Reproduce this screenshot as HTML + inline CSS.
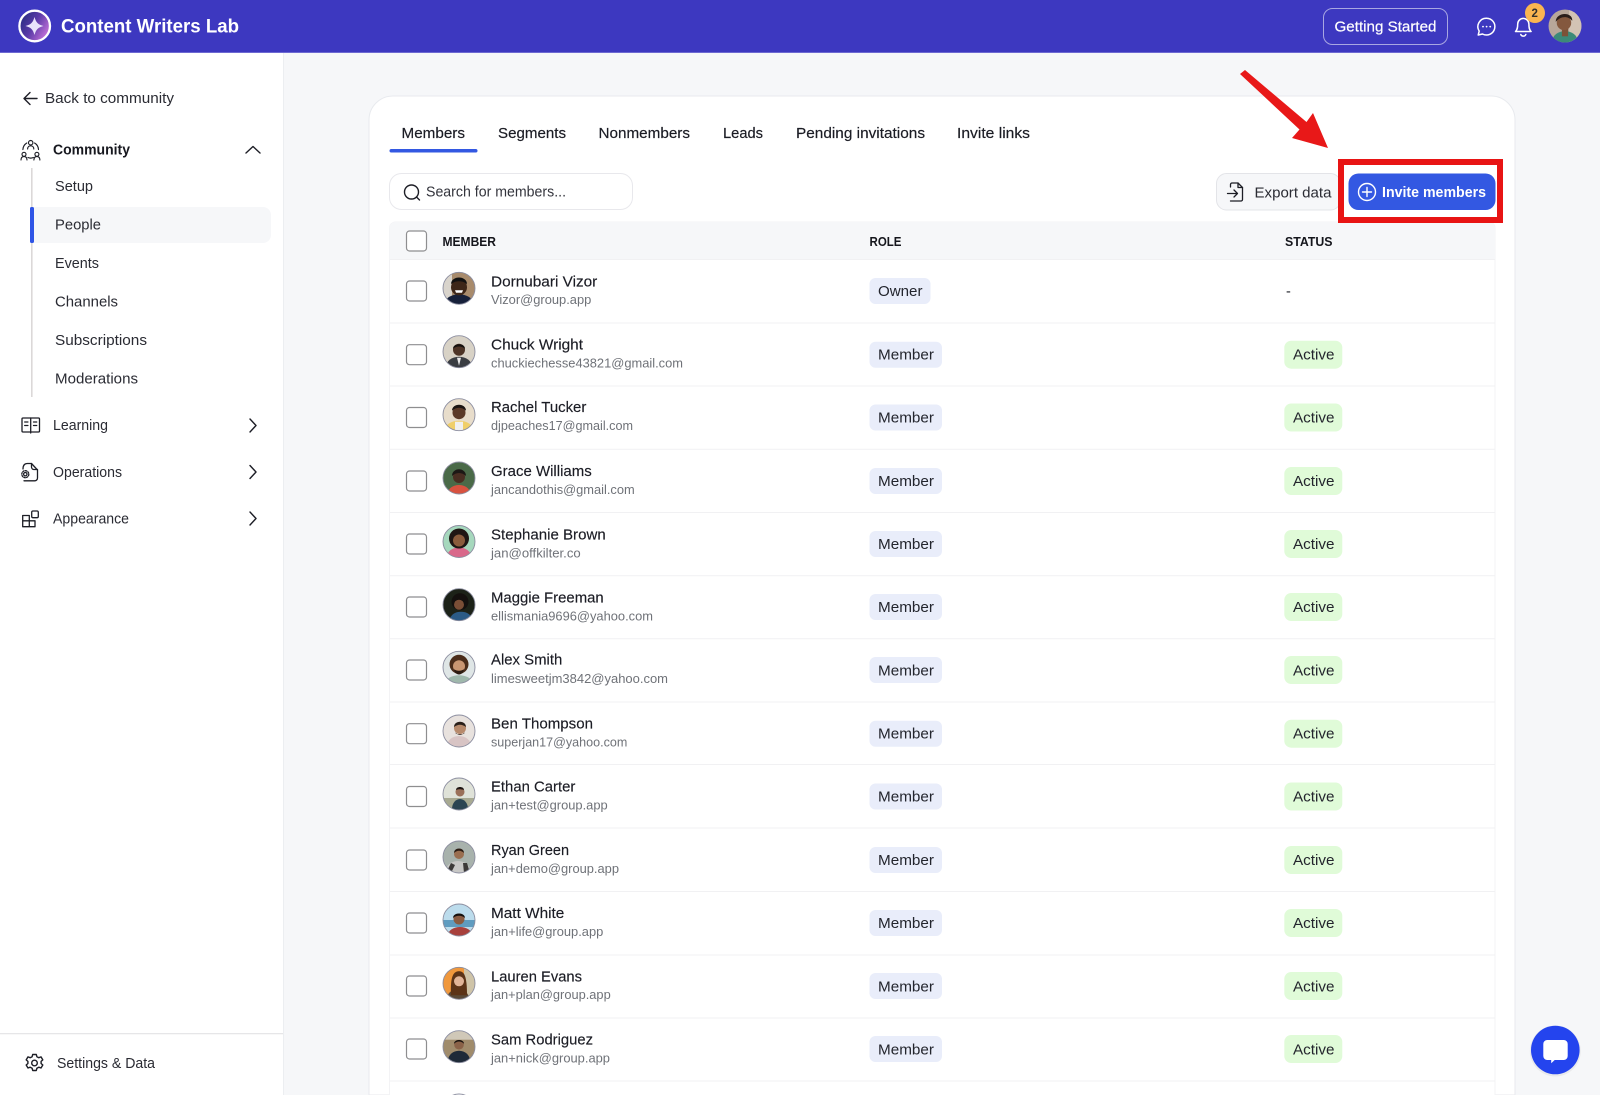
<!DOCTYPE html>
<html lang="en"><head><meta charset="utf-8"><title>Content Writers Lab</title>
<style>
html,body{margin:0;padding:0;background:#f6f7f9;width:1600px;height:1095px;overflow:hidden}
svg{display:block}
text{font-family:"Liberation Sans",sans-serif;fill:#1b1c24;white-space:pre}
.nm{font-size:15px;stroke:#1b1c24;stroke-width:.15}
.em{font-size:13px;fill:#6f7278}
.b{font-size:14.5px;fill:#23252d}
.s{font-size:14.5px;fill:#2a2b33}
.t{font-size:15px;stroke:#1b1c24;stroke-width:.18}
.h{font-size:12.5px;font-weight:bold;fill:#15161c}
.ic{fill:none;stroke:#1d1e26;stroke-width:1.4;stroke-linecap:round;stroke-linejoin:round}
.cb{fill:#fff;stroke:#8e8e90;stroke-width:1.2}
.dv{stroke:#f1f1f3;stroke-width:1}
.r{fill:#e9edfa}.a{fill:#e0fbd8}
.ring{fill:none;stroke:#8c8ea0;stroke-width:.9}
</style></head><body>
<svg width="1600" height="1095" viewBox="0 0 1600 1095" xmlns="http://www.w3.org/2000/svg">
<defs>
<clipPath id="av"><circle cx="0" cy="0" r="16"/></clipPath>
<linearGradient id="lg" x1="0" y1="0" x2="1" y2=".6"><stop offset="0" stop-color="#1b2a78"/><stop offset=".55" stop-color="#5a3aa8"/><stop offset="1" stop-color="#c070d8"/></linearGradient>
</defs>
<rect width="1600" height="1095" fill="#f6f7f9"/>
<!-- sidebar -->
<rect x="0" y="52" width="283.5" height="1043" fill="#fff"/>
<rect x="283" y="52" width="1" height="1043" fill="#eceef1"/>
<!-- header -->
<rect width="1600" height="52.5" fill="#3d38c0"/>
<rect y="52" width="1600" height="1" fill="#6d69d2"/>
<circle cx="34.7" cy="26" r="15.3" fill="url(#lg)" stroke="#fff" stroke-width="2.3"/>
<path d="M34.5 17C36 22.500 38 24.500 43.500 26C38 27.500 36 29.500 34.500 35C33 29.500 31 27.500 25.500 26C31 24.500 33 22.500 34.500 17Z" fill="#e9e4fb"/>
<text x="61" y="32.500" font-size="19" font-weight="bold" style="fill:#fff" textLength="178" lengthAdjust="spacingAndGlyphs">Content Writers Lab</text>
<rect x="1323.500" y="8.500" width="124" height="36" rx="9" fill="none" stroke="#a9a7e2" stroke-width="1"/>
<text x="1334.500" y="31.500" font-size="15" style="fill:#fff;stroke:#fff;stroke-width:.2" textLength="102" lengthAdjust="spacingAndGlyphs">Getting Started</text>
<path d="M1486.500 18.200a8.400 8.400 0 1 1-4 15.800l-4.300 1 1-3.900a8.400 8.400 0 0 1 7.300-12.900Z" fill="none" stroke="#fff" stroke-width="1.500" stroke-linejoin="round"/>
<circle cx="1483" cy="26.600" r=".9" fill="#fff"/><circle cx="1486.600" cy="26.600" r=".9" fill="#fff"/><circle cx="1490.200" cy="26.600" r=".9" fill="#fff"/>
<path d="M1515.500 31.500c1.800-1.800 2.200-3.600 2.200-7.500a5.600 5.600 0 0 1 11.200 0c0 3.900.4 5.700 2.200 7.500Z" fill="none" stroke="#fff" stroke-width="1.500" stroke-linejoin="round"/>
<path d="M1520.800 34.500a2.700 2.700 0 0 0 5 0" fill="none" stroke="#fff" stroke-width="1.500" stroke-linecap="round"/>
<circle cx="1535" cy="13" r="10" fill="#fab550"/>
<text x="1531.500" y="17" font-size="11.500" font-weight="bold" style="fill:#33302a">2</text>
<g transform="translate(1565,26) scale(1.03)" clip-path="url(#av)"><rect x="-16" y="-16" width="32" height="32" fill="#b8a79a"/><rect x="4" y="-16" width="12" height="32" fill="#d3c3b4"/><ellipse cx="0" cy="14" rx="12" ry="9" fill="#3c8a78"/><rect x="-3" y="2" width="6" height="8" fill="#7c5238"/><circle cx="-1" cy="-3" r="7" fill="#84583e"/><path d="M-9-4C-9-14 8-14 7-5C3-10-4-10-9-4Z" fill="#2a1e1a"/></g>
<!-- sidebar content -->
<path class="ic" d="M37 98.500H24.500M30 92.500L24 98.500L30 104.500"/>
<text x="45" y="103" class="s" textLength="129" lengthAdjust="spacingAndGlyphs">Back to community</text>
<g class="ic" style="stroke-width:1.150">
<circle cx="30.700" cy="142.700" r="2.200"/><circle cx="24" cy="154.300" r="2"/><circle cx="36.900" cy="154.300" r="2"/>
<path d="M21 160c0-2.400 1.200-3.400 3-3.400s3 1 3 3.400M33.900 160c0-2.400 1.200-3.400 3-3.400s3 1 3 3.400"/>
<path d="M27.600 149c0-2 1.300-3.200 3.100-3.200s3.100 1.200 3.100 3.200M26.800 143c-2.200 1.300-3.700 3.700-3.900 6.500M34.600 143c2.200 1.300 3.700 3.700 3.900 6.500M28 157.500c1.700.8 3.700.8 5.400 0"/></g>
<text x="53" y="154.300" font-size="14.500" font-weight="bold" style="fill:#17181f" textLength="77" lengthAdjust="spacingAndGlyphs">Community</text>
<path class="ic" d="M246 153L253 146.500L260 153"/>
<rect x="31" y="168" width="1.600" height="229" fill="#dbd8d8"/>
<path d="M34 207H263a8 8 0 0 1 8 8v20a8 8 0 0 1-8 8H34Z" fill="#f6f7f9"/>
<rect x="30" y="207" width="4" height="36" rx="1.500" fill="#2f55e6"/>
<text x="55" y="191" class="s" textLength="38" lengthAdjust="spacingAndGlyphs">Setup</text>
<text x="55" y="229.500" class="s" textLength="46" lengthAdjust="spacingAndGlyphs">People</text>
<text x="55" y="268" class="s" textLength="44" lengthAdjust="spacingAndGlyphs">Events</text>
<text x="55" y="306.700" class="s" textLength="63" lengthAdjust="spacingAndGlyphs">Channels</text>
<text x="55" y="345" class="s" textLength="92" lengthAdjust="spacingAndGlyphs">Subscriptions</text>
<text x="55" y="383.700" class="s" textLength="83" lengthAdjust="spacingAndGlyphs">Moderations</text>
<g class="ic" style="stroke-width:1.300"><rect x="22" y="418" width="17.500" height="14" rx="1"/><path d="M30.700 418v15"/><path d="M24.700 422h3.200M24.700 425.500h3.200M33.500 422h3.200M33.500 425.500h3.200"/></g>
<text x="53" y="430" class="s" textLength="55" lengthAdjust="spacingAndGlyphs">Learning</text>
<path class="ic" d="M250 419L256 425.500L250 432"/>
<g class="ic" style="stroke-width:1.300"><path d="M23 469c0-3.500 1.500-5.500 4.500-5.500h4l6 6.500v8a2.800 2.800 0 0 1-2.800 2.800H24"/><path d="M31.500 463.500v3.500a2.500 2.500 0 0 0 2.500 2.500h3.500"/><circle cx="25.300" cy="474.200" r="1.700"/><circle cx="25.300" cy="474.200" r="3.500" stroke-dasharray="1.400 1.350"/></g>
<text x="53" y="477" class="s" textLength="69" lengthAdjust="spacingAndGlyphs">Operations</text>
<path class="ic" d="M250 465.500L256 472L250 478.500"/>
<g class="ic" style="stroke-width:1.300"><path d="M22.700 526.700V515.500h6.600v11.200ZM22.700 520.800H35v5.900H22.700"/><rect x="31.700" y="511" width="6.600" height="6.700" rx="1.300"/></g>
<text x="53" y="523.700" class="s" textLength="76" lengthAdjust="spacingAndGlyphs">Appearance</text>
<path class="ic" d="M250 512L256 518.500L250 525"/>
<rect x="0" y="1033" width="283" height="1.300" fill="#e6e6e8"/>
<g class="ic"><circle cx="34.500" cy="1063" r="2.800"/><path d="M32.700 1054.500h3.600l.6 2.200 1.900 1 2.200-.8 1.800 3-1.700 1.500v2.100l1.700 1.500-1.800 3-2.200-.8-1.900 1-.6 2.300h-3.600l-.6-2.300-1.900-1-2.200.8-1.800-3 1.700-1.500v-2.100l-1.700-1.500 1.800-3 2.200.8 1.900-1z"/></g>
<text x="57" y="1068" class="s" textLength="98" lengthAdjust="spacingAndGlyphs">Settings &amp; Data</text>
<!-- card -->
<path d="M369 1095V120a24 24 0 0 1 24-24H1491a24 24 0 0 1 24 24V1095Z" fill="#fff" stroke="#e8eaee" stroke-width="1"/>
<text x="401.500" y="138" class="t" textLength="63.500" lengthAdjust="spacingAndGlyphs">Members</text>
<text x="498" y="138" class="t" textLength="68" lengthAdjust="spacingAndGlyphs">Segments</text>
<text x="598.500" y="138" class="t" textLength="91.500" lengthAdjust="spacingAndGlyphs">Nonmembers</text>
<text x="723" y="138" class="t" textLength="40" lengthAdjust="spacingAndGlyphs">Leads</text>
<text x="796" y="138" class="t" textLength="129" lengthAdjust="spacingAndGlyphs">Pending invitations</text>
<text x="957" y="138" class="t" textLength="73" lengthAdjust="spacingAndGlyphs">Invite links</text>
<rect x="389.500" y="149" width="88" height="3.500" rx="1.750" fill="#3358e2"/>
<rect x="389.500" y="173.500" width="243" height="36" rx="12" fill="#fff" stroke="#e8e8ec"/>
<circle cx="411.500" cy="192" r="7" fill="none" stroke="#1d1e26" stroke-width="1.400"/><path d="M416.500 197l3 3" stroke="#1d1e26" stroke-width="1.400" stroke-linecap="round"/>
<text x="426" y="196.500" font-size="14.500" style="fill:#33343c" textLength="140" lengthAdjust="spacingAndGlyphs">Search for members...</text>
<rect x="1216.500" y="173.500" width="124" height="36.500" rx="10" fill="#f6f7f9" stroke="#e3e4e8"/>
<g class="ic" style="stroke-width:1.300"><path d="M1230.500 187v-2.500a1.500 1.500 0 0 1 1.500-1.500h6l4.500 4.500v12a1.500 1.500 0 0 1-1.500 1.500h-10.500"/><path d="M1238 183v4.500h4.500M1227.500 193.500h10M1234 190l3.500 3.500-3.500 3.500"/></g>
<text x="1254.500" y="197.500" class="s" textLength="77" lengthAdjust="spacingAndGlyphs">Export data</text>
<path d="M1245 70L1306.500 122L1313 113L1328 148L1292 138L1299.500 129.500L1240 74Z" fill="#e81818"/>
<!-- table -->
<path d="M389.500 1095V228a6 6 0 0 1 6-6H1489a6 6 0 0 1 6 6V1095" fill="#fff" stroke="#f3f3f5"/>
<path d="M389.500 259.500V228a6 6 0 0 1 6-6H1489a6 6 0 0 1 6 6V259.500Z" fill="#f6f7f9"/>
<line class="dv" x1="390" x2="1495" y1="259.500" y2="259.500"/>
<line class="dv" x1="390" x2="1495" y1="323" y2="323"/>
<line class="dv" x1="390" x2="1495" y1="386" y2="386"/>
<line class="dv" x1="390" x2="1495" y1="449.300" y2="449.300"/>
<line class="dv" x1="390" x2="1495" y1="512.500" y2="512.500"/>
<line class="dv" x1="390" x2="1495" y1="575.700" y2="575.700"/>
<line class="dv" x1="390" x2="1495" y1="638.800" y2="638.800"/>
<line class="dv" x1="390" x2="1495" y1="702" y2="702"/>
<line class="dv" x1="390" x2="1495" y1="764.500" y2="764.500"/>
<line class="dv" x1="390" x2="1495" y1="828" y2="828"/>
<line class="dv" x1="390" x2="1495" y1="891.500" y2="891.500"/>
<line class="dv" x1="390" x2="1495" y1="955" y2="955"/>
<line class="dv" x1="390" x2="1495" y1="1018" y2="1018"/>
<line class="dv" x1="390" x2="1495" y1="1081" y2="1081"/>
<!-- red highlight and invite button, above table -->
<rect x="1341" y="162" width="159" height="58" fill="#fff" stroke="#e81414" stroke-width="6"/>
<rect x="1348.500" y="173.500" width="147" height="36.500" rx="10" fill="#3358e2"/>
<circle cx="1367" cy="192" r="8.500" fill="none" stroke="#fff" stroke-width="1.400"/><path d="M1367 187.500v9M1362.500 192h9" stroke="#fff" stroke-width="1.400" stroke-linecap="round"/>
<text x="1382" y="197" font-size="14.500" font-weight="bold" style="fill:#fff" textLength="104" lengthAdjust="spacingAndGlyphs">Invite members</text>
<rect class="cb" x="406.500" y="231" width="20" height="20" rx="3"/>
<text x="442.500" y="246" class="h" textLength="53.500" lengthAdjust="spacingAndGlyphs">MEMBER</text>
<text x="869.500" y="246" class="h" textLength="32" lengthAdjust="spacingAndGlyphs">ROLE</text>
<text x="1285" y="246" class="h" textLength="47.500" lengthAdjust="spacingAndGlyphs">STATUS</text>

<!-- row 1 -->
<rect class="cb" x="406.500" y="281" width="20" height="20" rx="3"/>
<g transform="translate(459,288.300)" clip-path="url(#av)"><rect x="-16" y="-16" width="32" height="32" fill="#a88b6c"/><rect x="-16" y="-16" width="9" height="32" fill="#d9d4cc"/><ellipse cx="0" cy="15" rx="14" ry="9" fill="#16203a"/><circle cx="0" cy="-1" r="8" fill="#3d2618"/><path d="M-8-4C-8-13 8-13 8-4C4-8-4-8-8-4Z" fill="#111"/><path d="M-4 2h8l-1 2.500h-6Z" fill="#fff"/></g><circle class="ring" cx="459" cy="288.300" r="16"/>
<text x="491" y="286.300" class="nm" textLength="106.300" lengthAdjust="spacingAndGlyphs">Dornubari Vizor</text>
<text x="491" y="304.100" class="em" textLength="100.300" lengthAdjust="spacingAndGlyphs">Vizor@group.app</text>
<rect class="r" x="869.500" y="278" width="61" height="26" rx="6"/>
<text x="878" y="296" class="b" textLength="44.500" lengthAdjust="spacingAndGlyphs">Owner</text>
<text x="1286" y="296" class="b">-</text>
<!-- row 2 -->
<rect class="cb" x="406.500" y="344.700" width="20" height="20" rx="3"/>
<g transform="translate(459,351.700)" clip-path="url(#av)"><rect x="-16" y="-16" width="32" height="32" fill="#d8d2c6"/><ellipse cx="0" cy="15" rx="13" ry="10" fill="#3a3d42"/><path d="M-2 6h4l-2 8Z" fill="#e8e8e8"/><circle cx="0" cy="-2" r="6" fill="#4d3426"/><path d="M-6-3C-6-9 6-9 6-3C3-6-3-6-6-3Z" fill="#15110e"/></g><circle class="ring" cx="459" cy="351.700" r="16"/>
<text x="491" y="349.700" class="nm" textLength="92" lengthAdjust="spacingAndGlyphs">Chuck Wright</text>
<text x="491" y="367.500" class="em" textLength="192" lengthAdjust="spacingAndGlyphs">chuckiechesse43821@gmail.com</text>
<rect class="r" x="869.500" y="341.700" width="72.500" height="26" rx="6"/>
<text x="878" y="359.700" class="b" textLength="56" lengthAdjust="spacingAndGlyphs">Member</text>
<rect class="a" x="1284.300" y="340.700" width="58" height="28" rx="7"/>
<text x="1293" y="359.700" class="b" textLength="41.500" lengthAdjust="spacingAndGlyphs">Active</text>
<!-- row 3 -->
<rect class="cb" x="406.500" y="407.500" width="20" height="20" rx="3"/>
<g transform="translate(459,414.700)" clip-path="url(#av)"><rect x="-16" y="-16" width="32" height="32" fill="#e8ddcb"/><ellipse cx="0" cy="15" rx="14" ry="9" fill="#f0cf6a"/><path d="M-4 7h8v9h-8Z" fill="#f0f0f0"/><circle cx="0" cy="-2" r="6.500" fill="#5c3a28"/><path d="M-7-4C-7-12 7-12 7-4C3-8-3-8-7-4Z" fill="#1c1512"/></g><circle class="ring" cx="459" cy="414.700" r="16"/>
<text x="491" y="412" class="nm" textLength="95.300" lengthAdjust="spacingAndGlyphs">Rachel Tucker</text>
<text x="491" y="430.200" class="em" textLength="142" lengthAdjust="spacingAndGlyphs">djpeaches17@gmail.com</text>
<rect class="r" x="869.500" y="404.500" width="72.500" height="26" rx="6"/>
<text x="878" y="422.700" class="b" textLength="56" lengthAdjust="spacingAndGlyphs">Member</text>
<rect class="a" x="1284.300" y="403.500" width="58" height="28" rx="7"/>
<text x="1293" y="422.700" class="b" textLength="41.500" lengthAdjust="spacingAndGlyphs">Active</text>
<!-- row 4 -->
<rect class="cb" x="406.500" y="471" width="20" height="20" rx="3"/>
<g transform="translate(459,478)" clip-path="url(#av)"><rect x="-16" y="-16" width="32" height="32" fill="#4a6a48"/><ellipse cx="0" cy="15" rx="11" ry="8" fill="#d8523f"/><circle cx="0" cy="-1" r="6" fill="#4a2e22"/><path d="M-7-2C-7-11 7-11 7-2C3-6-3-6-7-2Z" fill="#1c1815"/></g><circle class="ring" cx="459" cy="478" r="16"/>
<text x="491" y="476" class="nm" textLength="100.700" lengthAdjust="spacingAndGlyphs">Grace Williams</text>
<text x="491" y="493.800" class="em" textLength="143.700" lengthAdjust="spacingAndGlyphs">jancandothis@gmail.com</text>
<rect class="r" x="869.500" y="468" width="72.500" height="26" rx="6"/>
<text x="878" y="486" class="b" textLength="56" lengthAdjust="spacingAndGlyphs">Member</text>
<rect class="a" x="1284.300" y="467" width="58" height="28" rx="7"/>
<text x="1293" y="486" class="b" textLength="41.500" lengthAdjust="spacingAndGlyphs">Active</text>
<!-- row 5 -->
<rect class="cb" x="406.500" y="534" width="20" height="20" rx="3"/>
<g transform="translate(459,541.500)" clip-path="url(#av)"><rect x="-16" y="-16" width="32" height="32" fill="#a6d8bd"/><ellipse cx="0" cy="15" rx="12" ry="9" fill="#d9688a"/><circle cx="0" cy="-3" r="10" fill="#1f1714"/><circle cx="0" cy="-1" r="6" fill="#8a5c3c"/></g><circle class="ring" cx="459" cy="541.500" r="16"/>
<text x="491" y="539.500" class="nm" textLength="114.700" lengthAdjust="spacingAndGlyphs">Stephanie Brown</text>
<text x="491" y="557.300" class="em" textLength="89.700" lengthAdjust="spacingAndGlyphs">jan@offkilter.co</text>
<rect class="r" x="869.500" y="531" width="72.500" height="26" rx="6"/>
<text x="878" y="549" class="b" textLength="56" lengthAdjust="spacingAndGlyphs">Member</text>
<rect class="a" x="1284.300" y="530" width="58" height="28" rx="7"/>
<text x="1293" y="549" class="b" textLength="41.500" lengthAdjust="spacingAndGlyphs">Active</text>
<!-- row 6 -->
<rect class="cb" x="406.500" y="597" width="20" height="20" rx="3"/>
<g transform="translate(459,604.700)" clip-path="url(#av)"><rect x="-16" y="-16" width="32" height="32" fill="#1c2218"/><ellipse cx="2" cy="15" rx="11" ry="8" fill="#2b5b86"/><circle cx="1" cy="-3" r="8.500" fill="#14100e"/><circle cx="0" cy="0" r="5" fill="#7a4e36"/></g><circle class="ring" cx="459" cy="604.700" r="16"/>
<text x="491" y="602.700" class="nm" textLength="112.700" lengthAdjust="spacingAndGlyphs">Maggie Freeman</text>
<text x="491" y="620.500" class="em" textLength="162" lengthAdjust="spacingAndGlyphs">ellismania9696@yahoo.com</text>
<rect class="r" x="869.500" y="594" width="72.500" height="26" rx="6"/>
<text x="878" y="612" class="b" textLength="56" lengthAdjust="spacingAndGlyphs">Member</text>
<rect class="a" x="1284.300" y="593" width="58" height="28" rx="7"/>
<text x="1293" y="612" class="b" textLength="41.500" lengthAdjust="spacingAndGlyphs">Active</text>
<!-- row 7 -->
<rect class="cb" x="406.500" y="660" width="20" height="20" rx="3"/>
<g transform="translate(459,667.300)" clip-path="url(#av)"><rect x="-16" y="-16" width="32" height="32" fill="#dfe6e6"/><ellipse cx="0" cy="15" rx="13" ry="7" fill="#9fb8ac"/><circle cx="0" cy="-3" r="9.500" fill="#4a2c1a"/><circle cx="0" cy="-1" r="6" fill="#c99672"/><path d="M-5 2C-4 9 4 9 5 2C2 4-2 4-5 2Z" fill="#2c1c12"/></g><circle class="ring" cx="459" cy="667.300" r="16"/>
<text x="491" y="664.600" class="nm" textLength="71.300" lengthAdjust="spacingAndGlyphs">Alex Smith</text>
<text x="491" y="682.800" class="em" textLength="177" lengthAdjust="spacingAndGlyphs">limesweetjm3842@yahoo.com</text>
<rect class="r" x="869.500" y="657" width="72.500" height="26" rx="6"/>
<text x="878" y="675.300" class="b" textLength="56" lengthAdjust="spacingAndGlyphs">Member</text>
<rect class="a" x="1284.300" y="656" width="58" height="28" rx="7"/>
<text x="1293" y="675.300" class="b" textLength="41.500" lengthAdjust="spacingAndGlyphs">Active</text>
<!-- row 8 -->
<rect class="cb" x="406.500" y="723.700" width="20" height="20" rx="3"/>
<g transform="translate(459,731)" clip-path="url(#av)"><rect x="-16" y="-16" width="32" height="32" fill="#e8e2de"/><ellipse cx="0" cy="15" rx="12" ry="10" fill="#d8c4c4"/><circle cx="1" cy="-3" r="6" fill="#b78a6c"/><path d="M-5-4C-5-11 7-11 7-4C3-7-1-7-5-4Z" fill="#2a201a"/><path d="M-4 0C-3 5 5 5 6 0L5 3H-3Z" fill="#2e2018"/></g><circle class="ring" cx="459" cy="731" r="16"/>
<text x="491" y="728.300" class="nm" textLength="102" lengthAdjust="spacingAndGlyphs">Ben Thompson</text>
<text x="491" y="746.500" class="em" textLength="136.300" lengthAdjust="spacingAndGlyphs">superjan17@yahoo.com</text>
<rect class="r" x="869.500" y="720.700" width="72.500" height="26" rx="6"/>
<text x="878" y="738.700" class="b" textLength="56" lengthAdjust="spacingAndGlyphs">Member</text>
<rect class="a" x="1284.300" y="719.700" width="58" height="28" rx="7"/>
<text x="1293" y="738.700" class="b" textLength="41.500" lengthAdjust="spacingAndGlyphs">Active</text>
<!-- row 9 -->
<rect class="cb" x="406.500" y="786.500" width="20" height="20" rx="3"/>
<g transform="translate(459,794)" clip-path="url(#av)"><rect x="-16" y="-16" width="32" height="32" fill="#dfe2d8"/><rect x="-16" y="4" width="32" height="12" fill="#a8aa92"/><ellipse cx="1" cy="15" rx="8" ry="10" fill="#2b4452"/><circle cx="1" cy="-2" r="4.500" fill="#9a7058"/><path d="M-3-4C-3-8 5-8 5-4C2-5-1-5-3-4Z" fill="#1e1612"/></g><circle class="ring" cx="459" cy="794" r="16"/>
<text x="491" y="791.300" class="nm" textLength="84.300" lengthAdjust="spacingAndGlyphs">Ethan Carter</text>
<text x="491" y="809.500" class="em" textLength="116.700" lengthAdjust="spacingAndGlyphs">jan+test@group.app</text>
<rect class="r" x="869.500" y="783.500" width="72.500" height="26" rx="6"/>
<text x="878" y="801.500" class="b" textLength="56" lengthAdjust="spacingAndGlyphs">Member</text>
<rect class="a" x="1284.300" y="782.500" width="58" height="28" rx="7"/>
<text x="1293" y="801.500" class="b" textLength="41.500" lengthAdjust="spacingAndGlyphs">Active</text>
<!-- row 10 -->
<rect class="cb" x="406.500" y="850" width="20" height="20" rx="3"/>
<g transform="translate(459,857)" clip-path="url(#av)"><rect x="-16" y="-16" width="32" height="32" fill="#a8b2ac"/><ellipse cx="-1" cy="14" rx="12" ry="10" fill="#c8c8c6"/><path d="M-13 16L-8 6L-4 8L-8 16ZM11 16L8 6L4 6L5 16Z" fill="#3c3a38"/><circle cx="0" cy="-3" r="5" fill="#9a6e50"/><path d="M-5-4C-5-10 5-10 5-4C2-7-2-7-5-4Z" fill="#2b1c14"/></g><circle class="ring" cx="459" cy="857" r="16"/>
<text x="491" y="855" class="nm" textLength="78" lengthAdjust="spacingAndGlyphs">Ryan Green</text>
<text x="491" y="872.800" class="em" textLength="128" lengthAdjust="spacingAndGlyphs">jan+demo@group.app</text>
<rect class="r" x="869.500" y="847" width="72.500" height="26" rx="6"/>
<text x="878" y="865" class="b" textLength="56" lengthAdjust="spacingAndGlyphs">Member</text>
<rect class="a" x="1284.300" y="846" width="58" height="28" rx="7"/>
<text x="1293" y="865" class="b" textLength="41.500" lengthAdjust="spacingAndGlyphs">Active</text>
<!-- row 11 -->
<rect class="cb" x="406.500" y="913" width="20" height="20" rx="3"/>
<g transform="translate(459,920)" clip-path="url(#av)"><rect x="-16" y="-16" width="32" height="32" fill="#bcdcec"/><rect x="-16" y="0" width="32" height="7" fill="#5f9cc0"/><ellipse cx="1" cy="15" rx="12" ry="8" fill="#a8403c"/><circle cx="0" cy="-1" r="5.500" fill="#8a5c42"/><path d="M-6-2C-6-8 6-8 6-2C3-5-3-5-6-2Z" fill="#16110e"/></g><circle class="ring" cx="459" cy="920" r="16"/>
<text x="491" y="918" class="nm" textLength="73.300" lengthAdjust="spacingAndGlyphs">Matt White</text>
<text x="491" y="935.800" class="em" textLength="112.300" lengthAdjust="spacingAndGlyphs">jan+life@group.app</text>
<rect class="r" x="869.500" y="910" width="72.500" height="26" rx="6"/>
<text x="878" y="928" class="b" textLength="56" lengthAdjust="spacingAndGlyphs">Member</text>
<rect class="a" x="1284.300" y="909" width="58" height="28" rx="7"/>
<text x="1293" y="928" class="b" textLength="41.500" lengthAdjust="spacingAndGlyphs">Active</text>
<!-- row 12 -->
<rect class="cb" x="406.500" y="976" width="20" height="20" rx="3"/>
<g transform="translate(459,983.300)" clip-path="url(#av)"><rect x="-16" y="-16" width="32" height="32" fill="#f0983c"/><rect x="5" y="-16" width="11" height="32" fill="#cfc4a8"/><ellipse cx="-1" cy="15" rx="11" ry="9" fill="#5a4a38"/><path d="M-8 12C-9-8-5-12 0-12S8-8 8 12Z" fill="#5c3418"/><circle cx="0" cy="-2" r="5" fill="#e0b498"/></g><circle class="ring" cx="459" cy="983.300" r="16"/>
<text x="491" y="981.300" class="nm" textLength="91" lengthAdjust="spacingAndGlyphs">Lauren Evans</text>
<text x="491" y="999.100" class="em" textLength="119.700" lengthAdjust="spacingAndGlyphs">jan+plan@group.app</text>
<rect class="r" x="869.500" y="973" width="72.500" height="26" rx="6"/>
<text x="878" y="991.300" class="b" textLength="56" lengthAdjust="spacingAndGlyphs">Member</text>
<rect class="a" x="1284.300" y="972" width="58" height="28" rx="7"/>
<text x="1293" y="991.300" class="b" textLength="41.500" lengthAdjust="spacingAndGlyphs">Active</text>
<!-- row 13 -->
<rect class="cb" x="406.500" y="1039" width="20" height="20" rx="3"/>
<g transform="translate(459,1046.700)" clip-path="url(#av)"><rect x="-16" y="-16" width="32" height="32" fill="#a08c6c"/><rect x="-16" y="-16" width="32" height="9" fill="#d0c8b8"/><ellipse cx="0" cy="14" rx="11" ry="10" fill="#1e2a38"/><circle cx="0" cy="-2" r="4.800" fill="#8a6248"/><path d="M-5-3C-5-8 5-8 5-3C2-6-2-6-5-3Z" fill="#1a1410"/></g><circle class="ring" cx="459" cy="1046.700" r="16"/>
<text x="491" y="1044.700" class="nm" textLength="102" lengthAdjust="spacingAndGlyphs">Sam Rodriguez</text>
<text x="491" y="1062.500" class="em" textLength="119" lengthAdjust="spacingAndGlyphs">jan+nick@group.app</text>
<rect class="r" x="869.500" y="1036" width="72.500" height="26" rx="6"/>
<text x="878" y="1054.300" class="b" textLength="56" lengthAdjust="spacingAndGlyphs">Member</text>
<rect class="a" x="1284.300" y="1035" width="58" height="28" rx="7"/>
<text x="1293" y="1054.300" class="b" textLength="41.500" lengthAdjust="spacingAndGlyphs">Active</text>
<!-- row 14 peek -->
<circle class="ring" cx="459" cy="1110" r="16"/>
<!-- chat fab -->
<circle cx="1555.300" cy="1051" r="25.500" fill="#000" opacity=".05"/>
<circle cx="1555.300" cy="1050" r="24.300" fill="#2444ee"/>
<path d="M1547.300 1040h16.400a4 4 0 0 1 4 4v12a4 4 0 0 1-4 4h-9l-3.500 3.200V1060h-3.900a4 4 0 0 1-4-4v-12a4 4 0 0 1 4-4Z" fill="#fff"/>
</svg>
</body></html>
